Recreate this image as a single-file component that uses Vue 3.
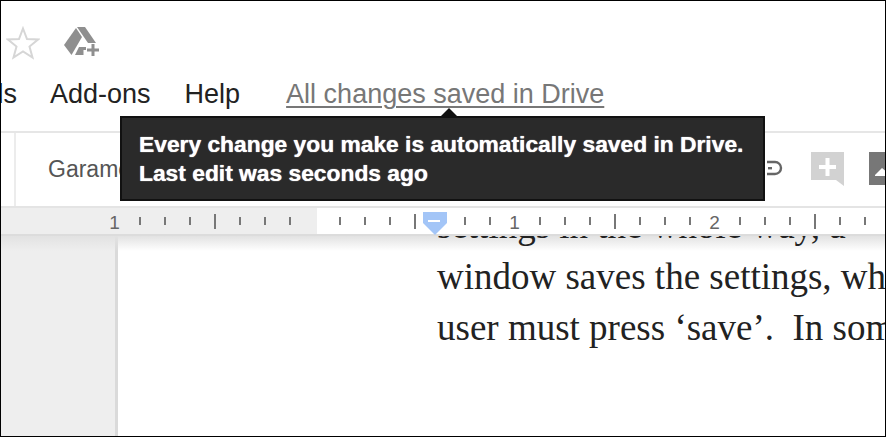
<script setup>
// ruler marks, one cell per 25px, starting at the first "1"
const labels = { 0: "1", 16: "1", 24: "2" };
const rulerMarks = [];
for (let i = 0; i < 31; i++) {
  rulerMarks.push({
    id: i,
    label: labels[i],
    big: i % 4 === 0,
    hidden: i === 8,
  });
}
</script>

<template>
  <div class="page">
    <div class="title-row">
      <svg class="star" width="34" height="34" viewBox="0 0 34 34">
        <path
          d="M17 2.500 21 13 32 13.500 23.500 20.500 26.500 31.500 17 25.500 7.500 31.500 10.500 20.500 2 13.500 13 13Z"
          fill="none"
          stroke="#d6d6d6"
          stroke-width="2"
        />
      </svg>
      <svg class="drive" width="36" height="32" viewBox="0 0 36 32">
        <path d="M13 1H21L32 17H24Z" fill="#8f8f8f" />
        <path d="M12 2 0 19 7.500 29 18 11Z" fill="#8f8f8f" />
        <path d="M15 21H22V24H19.500V29H11Z" fill="#8f8f8f" />
        <path d="M27.500 18H30.500V22.500H35V25.500H30.500V30H27.500V25.500H23V22.500H27.500Z" fill="#8f8f8f" />
      </svg>
    </div>

    <div class="menu-row">
      <span class="menu-item cut">Tools</span>
      <span class="menu-item">Add-ons</span>
      <span class="menu-item">Help</span>
      <span class="save-status">All changes saved in Drive</span>
    </div>

    <div class="toolbar">
      <div class="toolbar-left"></div>
      <span class="font-name">Garamond</span>
      <div class="toolbar-right">
        <svg class="link-icon" width="18" height="16" viewBox="0 0 18 16">
          <path d="M1 2H9A5.500 5.500 0 0 1 9 14H1" fill="none" stroke="#666" stroke-width="2.400" />
          <rect x="2" y="7" width="4" height="2.400" fill="#666" />
        </svg>
        <svg class="comment-icon" width="33" height="35" viewBox="0 0 33 35">
          <path d="M0 0H33V34L25 28H0Z" fill="#d2d2d2" />
          <path d="M14.500 6H18.500V13H25V17H18.500V24H14.500V17H8V13H14.500Z" fill="#fff" />
        </svg>
        <svg class="image-icon" width="20" height="33" viewBox="0 0 20 33">
          <rect width="20" height="33" fill="#777" />
          <path d="M6 23 13 16 20 22V24H6Z" fill="#fff" />
        </svg>
      </div>
    </div>

    <div class="ruler">
      <div class="ruler-gray"></div>
      <div class="ruler-marks">
        <div v-for="m in rulerMarks" :key="m.id" class="ruler-cell">
          <span v-if="m.label" class="ruler-num">{{ m.label }}</span>
          <i v-else-if="!m.hidden" :class="m.big ? 'tick big' : 'tick'"></i>
        </div>
      </div>
      <svg class="indent" width="24" height="23" viewBox="0 0 24 23">
        <path d="M0 0H24V11L12 23 0 11Z" fill="#a3c5f7" />
        <rect x="5" y="8" width="12" height="2" fill="#fff" />
      </svg>
    </div>

    <div class="doc-area">
      <div class="doc-side"></div>
      <div class="doc-shadow"></div>
      <div class="doc-sheet">
        <p class="doc-text">settings in the whole way, a</p>
        <p class="doc-text">window saves the settings, which means the</p>
        <p class="doc-text">user must press ‘save’.&nbsp; In some other cases</p>
      </div>
    </div>

    <div class="tooltip">
      <div>Every change you make is automatically saved in Drive.</div>
      <div>Last edit was seconds ago</div>
    </div>
  </div>
</template>

<style>
html,
body {
  margin: 0;
  background: #fff;
}
</style>

<style scoped>
.page {
  position: relative;
  box-sizing: border-box;
  width: 886px;
  height: 437px;
  border: 1px solid #000;
  overflow: hidden;
  background: #fff;
  font-family: "Liberation Sans", Arial, sans-serif;
  display: flex;
  flex-direction: column;
}

.title-row {
  height: 69px;
  display: flex;
  align-items: flex-start;
  padding: 25px 0 0 5px;
  box-sizing: border-box;
  gap: 24px;
  flex: none;
}

.menu-row {
  height: 63px;
  flex: none;
  display: flex;
  align-items: flex-start;
  font-size: 27px;
  color: #222;
  box-sizing: border-box;
  padding-top: 9px;
  border-bottom: 2px solid #e6e6e6;
}

.menu-item {
  margin-right: 34px;
}

.cut {
  width: 16px;
  margin-right: 33px;
  direction: rtl;
  overflow: hidden;
  white-space: nowrap;
}

.save-status {
  margin-left: 12px;
  color: #777;
  text-decoration: underline;
  text-decoration-thickness: 2px;
  text-underline-offset: 3px;
}

.toolbar {
  height: 73px;
  flex: none;
  display: flex;
  align-items: center;
}

.toolbar-left {
  width: 13px;
  align-self: stretch;
  border-right: 2px solid #ececec;
}

.font-name {
  margin-left: 32px;
  font-size: 23px;
  color: #555;
}

.toolbar-right {
  margin-left: auto;
  margin-right: -4px;
  align-self: flex-start;
  display: flex;
  align-items: flex-start;
  margin-top: 19px;
  gap: 27px;
}

.link-icon {
  margin-top: 8px;
}

.comment-icon {
  margin-right: -2px;
}

.ruler {
  height: 30px;
  flex: none;
  display: flex;
  background: #fff;
  border-top: 2px solid #e4e4e4;
  border-bottom: 2px solid #dcdcdc;
  box-sizing: border-box;
  position: relative;
  z-index: 2;
}

.ruler-gray {
  position: absolute;
  left: 0;
  top: 0;
  bottom: 0;
  width: 316px;
  background: #eeeeee;
}

.ruler-marks {
  position: relative;
  display: flex;
  margin-left: 101px;
}

.ruler-cell {
  width: 25px;
  flex: none;
  display: flex;
  justify-content: center;
  align-items: center;
}

.tick {
  display: block;
  width: 2px;
  height: 8px;
  background: #777;
}

.tick.big {
  height: 15px;
}

.ruler-num {
  font-size: 19px;
  color: #666;
  padding-top: 3px;
}

.indent {
  position: absolute;
  left: 422px;
  top: 4px;
}

.doc-area {
  position: relative;
  flex: 1;
  display: flex;
  min-height: 0;
  background: #fff;
}

.doc-shadow {
  position: absolute;
  left: 0;
  right: 0;
  top: 0;
  height: 15px;
  background: linear-gradient(#e2e2e2, rgba(255, 255, 255, 0));
}

.doc-side {
  width: 114px;
  flex: none;
  background: #eeeeee;
  border-right: 3px solid #dadada;
}

.doc-sheet {
  position: relative;
  flex: 1;
  overflow: hidden;
  padding-left: 319px;
  margin-top: -36px;
  white-space: nowrap;
}

.doc-text {
  margin: 0;
  font-family: "Liberation Serif", "Times New Roman", serif;
  font-size: 37px;
  line-height: 51px;
  color: #222;
}

.tooltip {
  position: absolute;
  left: 119px;
  top: 115px;
  width: 645px;
  height: 85px;
  box-sizing: border-box;
  background: #2a2a2a;
  border: 2px solid #111;
  color: #fff;
  font-size: 22.800px;
  font-weight: 700;
  line-height: 29px;
  padding: 12px 0 0 17px;
  white-space: nowrap;
  text-shadow: 0 0 1px #fff;
  z-index: 3;
}

.tooltip::before {
  content: "";
  position: absolute;
  left: 317px;
  top: -10px;
  border-left: 10px solid transparent;
  border-right: 10px solid transparent;
  border-bottom: 10px solid #111;
}
</style>
